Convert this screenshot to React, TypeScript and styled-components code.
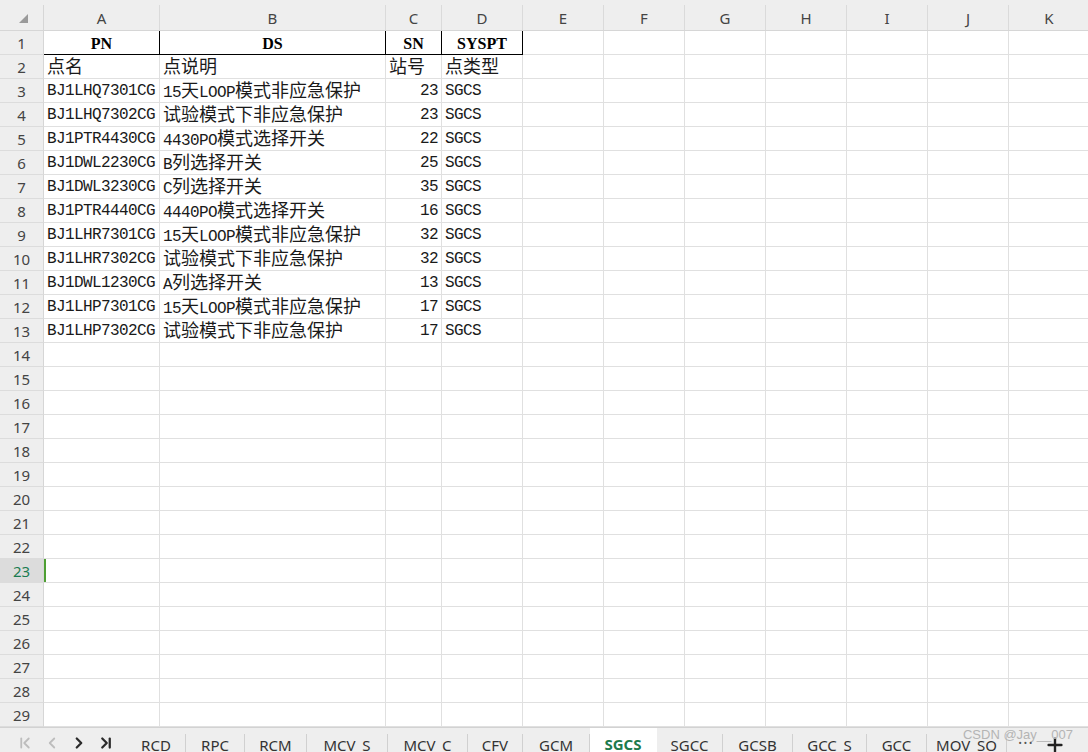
import React from 'react';
import styled, { createGlobalStyle } from 'styled-components';
import { ChevronFirst, ChevronLeft, ChevronRight, ChevronLast, Plus } from 'lucide-react';

const GlobalStyle = createGlobalStyle`
  html, body {
    margin: 0;
    padding: 0;
    background: #ffffff;
    overflow: hidden;
  }
  * {
    box-sizing: border-box;
  }
`;

const COLS = '44px 116px 226px 56px repeat(8, 81px)';
const LETTERS = ['A', 'B', 'C', 'D', 'E', 'F', 'G', 'H', 'I', 'J', 'K'];

const Page = styled.div`
  width: 1088px;
  height: 752px;
  display: flex;
  flex-direction: column;
  overflow: hidden;
  font-family: 'Noto Sans', 'Liberation Sans', sans-serif;
`;

const Sheet = styled.div`
  flex: 1;
  overflow: hidden;
`;

const HeaderRow = styled.div`
  display: grid;
  grid-template-columns: ${COLS};
  height: 31px;
  padding-top: 5px;
  background: #eeeeee;
  border-bottom: 1px solid #d6d6d6;
`;

const Corner = styled.div`
  display: flex;
  align-items: flex-end;
  justify-content: center;
  padding-bottom: 7px;
  padding-left: 3px;
  border-right: 1px solid #d6d6d6;
`;

const ColHead = styled.div`
  display: flex;
  align-items: center;
  justify-content: center;
  font-size: 15px;
  color: #444;
  border-right: 1px solid #dadada;
`;

const Row = styled.div`
  display: grid;
  grid-template-columns: ${COLS};
  grid-template-rows: 24px;
  height: 24px;
`;

const RowHead = styled.div<{ $active?: boolean }>`
  display: flex;
  align-items: center;
  justify-content: center;
  font-size: 15px;
  color: ${(p) => (p.$active ? '#1b7c52' : '#444')};
  background: ${(p) => (p.$active ? '#dcdcdc' : '#eeeeee')};
  border-right: 1px solid #d6d6d6;
  border-bottom: 1px solid #dcdcdc;
`;

const Cell = styled.div<{ $strong?: boolean; $align?: 'left' | 'right' | 'center'; $active?: boolean }>`
  display: flex;
  align-items: center;
  justify-content: ${(p) => (p.$align === 'right' ? 'flex-end' : p.$align === 'center' ? 'center' : 'flex-start')};
  height: 24px;
  padding: 0 3px;
  white-space: nowrap;
  color: #1a1a1a;
  border-right: 1px solid ${(p) => (p.$strong ? '#000' : '#e0e0e0')};
  border-bottom: 1px solid ${(p) => (p.$strong ? '#000' : '#e0e0e0')};
  box-shadow: ${(p) => (p.$active ? 'inset 2px 0 0 #4e9f33' : 'none')};
`;

const Text = styled.span`
  display: block;
  height: 23px;
  padding-top: 1px;
  font-family: 'Liberation Mono', 'Noto Sans CJK SC', monospace;
  font-size: 16px;
  letter-spacing: -0.6px;
  line-height: 22px;
`;

const Title = styled.span`
  font-family: 'Liberation Serif', serif;
  font-weight: 700;
  font-size: 16px;
  color: #000;
  padding-top: 2px;
`;

const Cjk = styled.span`
  font-family: 'Noto Sans CJK SC', sans-serif;
  font-size: 18px;
  letter-spacing: 0;
  line-height: 1;
`;

const TabBar = styled.div`
  position: relative;
  height: 25px;
  display: flex;
  align-items: flex-start;
  background: #eeeeee;
  border-top: 1px solid #d2d2d2;
  overflow: hidden;
`;

const Nav = styled.div`
  width: 127px;
  flex-shrink: 0;
  display: flex;
  align-items: center;
  gap: 9px;
  padding: 6px 0 0 16px;
`;

const NavBtn = styled.span<{ $disabled?: boolean }>`
  display: flex;
  width: 18px;
  justify-content: center;
  color: ${(p) => (p.$disabled ? '#bdbdbd' : '#2b2b2b')};
`;

const Tab = styled.div<{ $active?: boolean; $w: number }>`
  flex-shrink: 0;
  width: ${(p) => p.$w}px;
  height: 25px;
  overflow: hidden;
  margin-top: ${(p) => (p.$active ? '-1px' : '6px')};
  padding-top: ${(p) => (p.$active ? '7px' : '1px')};
  text-align: center;
  font-size: 15px;
  line-height: 20px;
  white-space: nowrap;
  color: ${(p) => (p.$active ? '#1d7a4c' : '#333')};
  font-weight: ${(p) => (p.$active ? 700 : 400)};
  background: ${(p) => (p.$active ? '#ffffff' : 'transparent')};
  border-right: 1px solid ${(p) => (p.$active ? 'transparent' : '#d0d0d0')};
`;

const More = styled.div`
  flex-shrink: 0;
  margin: 4px 0 0 11px;
  font-size: 16px;
  color: #555;
  letter-spacing: 1px;
`;

const AddBtn = styled.div`
  flex-shrink: 0;
  display: flex;
  margin: 6px 0 0 10px;
  color: #222;
`;

const Watermark = styled.div`
  position: absolute;
  right: 15px;
  top: -1px;
  font-family: 'Liberation Sans', sans-serif;
  font-size: 13px;
  color: #b4b4b4;
  pointer-events: none;
`;

type RowData = [string, string, string, string];

const data: RowData[] = [
  ['BJ1LHQ7301CG', '15天LOOP模式非应急保护', '23', 'SGCS'],
  ['BJ1LHQ7302CG', '试验模式下非应急保护', '23', 'SGCS'],
  ['BJ1PTR4430CG', '4430PO模式选择开关', '22', 'SGCS'],
  ['BJ1DWL2230CG', 'B列选择开关', '25', 'SGCS'],
  ['BJ1DWL3230CG', 'C列选择开关', '35', 'SGCS'],
  ['BJ1PTR4440CG', '4440PO模式选择开关', '16', 'SGCS'],
  ['BJ1LHR7301CG', '15天LOOP模式非应急保护', '32', 'SGCS'],
  ['BJ1LHR7302CG', '试验模式下非应急保护', '32', 'SGCS'],
  ['BJ1DWL1230CG', 'A列选择开关', '13', 'SGCS'],
  ['BJ1LHP7301CG', '15天LOOP模式非应急保护', '17', 'SGCS'],
  ['BJ1LHP7302CG', '试验模式下非应急保护', '17', 'SGCS'],
];

const tabs: [string, number][] = [
  ['RCD', 59],
  ['RPC', 59],
  ['RCM', 62],
  ['MCV_S', 81],
  ['MCV_C', 80],
  ['CFV', 55],
  ['GCM', 67],
  ['SGCS', 67],
  ['SGCC', 66],
  ['GCSB', 70],
  ['GCC_S', 74],
  ['GCC', 60],
  ['MOV_SO', 80],
];

// CJK runs get the bigger font so they keep the 2:1 width of the latin text
function Rich({ text }: { text: string }) {
  const parts = text.split(/([\u3000-\u9fff\uff00-\uffef]+)/);
  return (
    <Text>
      {parts.map((p, i) => (i % 2 ? <Cjk key={i}>{p}</Cjk> : <React.Fragment key={i}>{p}</React.Fragment>))}
    </Text>
  );
}

function EmptyCells({ from, active }: { from: number; active?: boolean }) {
  return (
    <>
      {LETTERS.slice(from).map((l, i) => (
        <Cell key={l} $active={active && from + i === 0} />
      ))}
    </>
  );
}

export default function App() {
  const rows: React.ReactNode[] = [];

  rows.push(
    <Row key={1}>
      <RowHead>1</RowHead>
      <Cell $strong $align="center"><Title>PN</Title></Cell>
      <Cell $strong $align="center"><Title>DS</Title></Cell>
      <Cell $strong $align="center"><Title>SN</Title></Cell>
      <Cell $strong $align="center"><Title>SYSPT</Title></Cell>
      <EmptyCells from={4} />
    </Row>
  );
  rows.push(
    <Row key={2}>
      <RowHead>2</RowHead>
      <Cell><Rich text="点名" /></Cell>
      <Cell><Rich text="点说明" /></Cell>
      <Cell><Rich text="站号" /></Cell>
      <Cell><Rich text="点类型" /></Cell>
      <EmptyCells from={4} />
    </Row>
  );
  data.forEach((d, i) => {
    rows.push(
      <Row key={i + 3}>
        <RowHead>{i + 3}</RowHead>
        <Cell><Rich text={d[0]} /></Cell>
        <Cell><Rich text={d[1]} /></Cell>
        <Cell $align="right"><Rich text={d[2]} /></Cell>
        <Cell><Rich text={d[3]} /></Cell>
        <EmptyCells from={4} />
      </Row>
    );
  });
  for (let n = 14; n <= 30; n++) {
    rows.push(
      <Row key={n}>
        <RowHead $active={n === 23}>{n}</RowHead>
        <EmptyCells from={0} active={n === 23} />
      </Row>
    );
  }

  return (
    <Page>
      <GlobalStyle />
      <Sheet>
        <HeaderRow>
          <Corner>
            <svg width="9" height="9" viewBox="0 0 9 9">
              <polygon points="0,9 9,0 9,9" fill="#9a9a9a" />
            </svg>
          </Corner>
          {LETTERS.map((l) => (
            <ColHead key={l}>{l}</ColHead>
          ))}
        </HeaderRow>
        {rows}
      </Sheet>
      <TabBar>
        <Nav>
          <NavBtn $disabled><ChevronFirst size={18} strokeWidth={2.4} /></NavBtn>
          <NavBtn $disabled><ChevronLeft size={18} strokeWidth={2.4} /></NavBtn>
          <NavBtn><ChevronRight size={18} strokeWidth={3} /></NavBtn>
          <NavBtn><ChevronLast size={18} strokeWidth={3} /></NavBtn>
        </Nav>
        {tabs.map(([t, w]) => (
          <Tab key={t} $w={w} $active={t === 'SGCS'}>{t}</Tab>
        ))}
        <More>···</More>
        <AddBtn><Plus size={22} strokeWidth={2.6} /></AddBtn>
        <Watermark>CSDN @Jay__007</Watermark>
      </TabBar>
    </Page>
  );
}
